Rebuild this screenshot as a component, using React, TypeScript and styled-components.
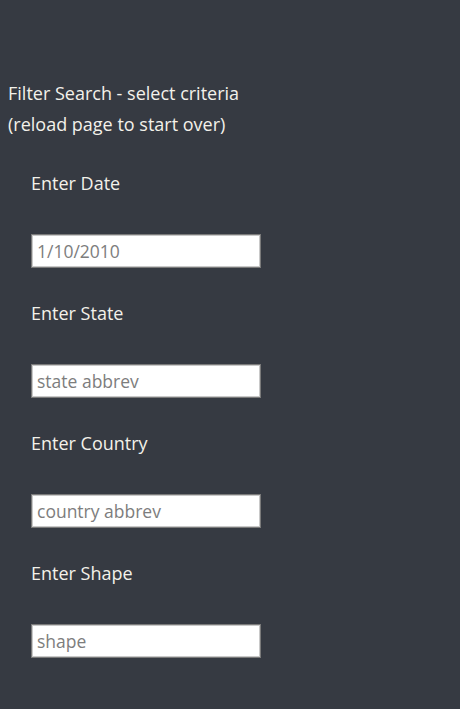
import React from "react";
import styled, { createGlobalStyle } from "styled-components";

const Global = createGlobalStyle`
  html, body { margin: 0; padding: 0; background: #363a42; }
  body { font-family: "Open Sans", "Noto Sans", sans-serif; }
`;

const Page = styled.div`
  min-height: 100vh;
  box-sizing: border-box;
  background: #363a42;
  padding: 78px 0 0 8px;
  color: #f3f1ea;
`;

const Title = styled.div`
  font-size: 18px;
  line-height: 31px;
`;

const Form = styled.form`
  display: flex;
  flex-direction: column;
  gap: 33px;
  padding-left: 23px;
  margin-top: 31px;
`;

const Field = styled.div`
  display: flex;
  flex-direction: column;
  align-items: flex-start;
`;

const Label = styled.label`
  font-size: 18px;
  line-height: 24px;
  margin-bottom: 39px;
`;

const Input = styled.input`
  box-sizing: border-box;
  width: 230px;
  height: 34px;
  margin: 0;
  padding: 0 5px;
  border: 1px solid #7a7a7a;
  box-shadow: inset 0 0 0 1px #c9c9c9;
  background: #fff;
  font-family: "Open Sans", "Noto Sans", sans-serif;
  font-size: 17.5px;
  color: #222;
  outline: none;
  &::placeholder { color: #7d7d7d; opacity: 1; }
`;

const fields = [
  { label: "Enter Date", placeholder: "1/10/2010" },
  { label: "Enter State", placeholder: "state abbrev" },
  { label: "Enter Country", placeholder: "country abbrev" },
  { label: "Enter Shape", placeholder: "shape" },
];

export default function App() {
  return (
    <>
      <Global />
      <Page>
        <Title>
          Filter Search - select criteria
          <br />
          (reload page to start over)
        </Title>
        <Form onSubmit={(e) => e.preventDefault()}>
          {fields.map((f) => (
            <Field key={f.label}>
              <Label>{f.label}</Label>
              <Input type="text" placeholder={f.placeholder} />
            </Field>
          ))}
        </Form>
      </Page>
    </>
  );
}
